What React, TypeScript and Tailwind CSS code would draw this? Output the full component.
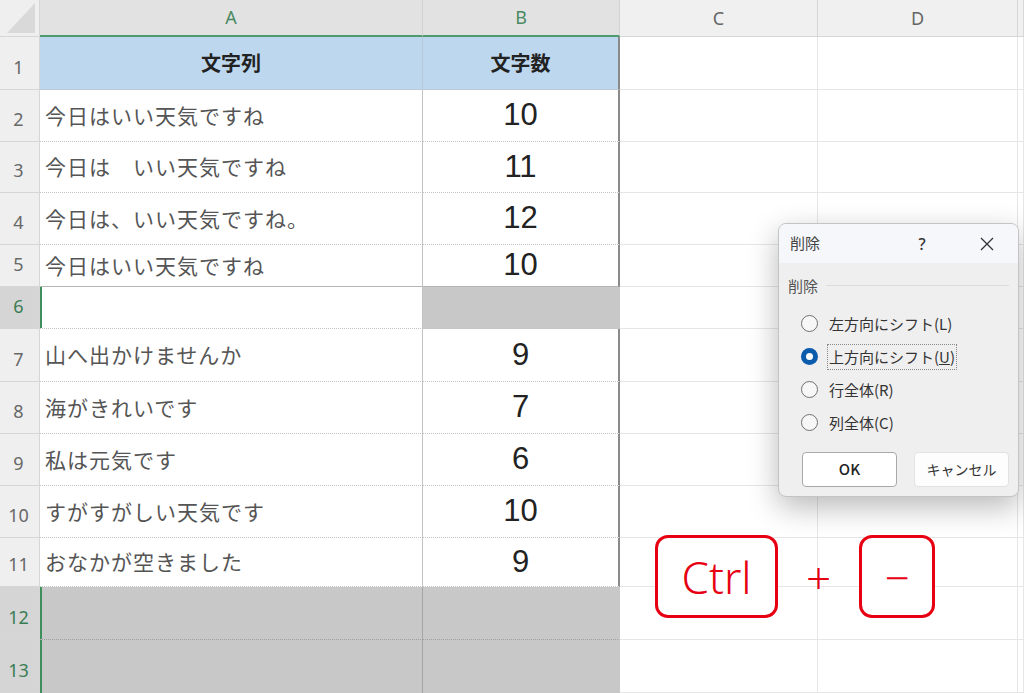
import clsx from "clsx"

type Row = { n: number; text?: string; count?: string; kind: "data" | "blank" | "grey" }

const ROWS: Row[] = [
  { n: 2, text: "今日はいい天気ですね", count: "10", kind: "data" },
  { n: 3, text: "今日は　いい天気ですね", count: "11", kind: "data" },
  { n: 4, text: "今日は、いい天気ですね。", count: "12", kind: "data" },
  { n: 5, text: "今日はいい天気ですね", count: "10", kind: "data" },
  { n: 6, kind: "blank" },
  { n: 7, text: "山へ出かけませんか", count: "9", kind: "data" },
  { n: 8, text: "海がきれいです", count: "7", kind: "data" },
  { n: 9, text: "私は元気です", count: "6", kind: "data" },
  { n: 10, text: "すがすがしい天気です", count: "10", kind: "data" },
  { n: 11, text: "おなかが空きました", count: "9", kind: "data" },
  { n: 12, kind: "grey" },
  { n: 13, kind: "grey" },
]

const jp = "font-['Noto_Sans_CJK_JP','Noto_Sans',sans-serif]"

function RowHead({ n, sel }: { n: number; sel?: boolean }) {
  return (
    <div
      className={clsx(
        "flex items-end justify-center pb-[9px] pr-[2px] border-r border-b border-[#d6d6d6] text-[18px] leading-[25px] font-['Noto_Sans',sans-serif]",
        sel ? "bg-[#d5d5d5] text-[#3b7d54]" : "bg-[#efefef] text-[#686868]",
      )}
    >
      {n}
    </div>
  )
}

function ColHead({ label, sel }: { label: string; sel?: boolean }) {
  return (
    <div
      className={clsx(
        "flex items-center justify-center border-r text-[18px] font-['Noto_Sans',sans-serif]",
        sel
          ? "bg-[#e2e2e2] text-[#4a8a62] border-b-2 border-b-[#4e9a6c] border-r-[#d2d2d2]"
          : "bg-[#f0f0f0] text-[#666] border-b border-[#d6d6d6]",
      )}
    >
      {label}
    </div>
  )
}

function Plain() {
  return <div className="border-r border-b border-[#e6e6e6] bg-white" />
}

function Radio({ label, checked, focus }: { label: React.ReactNode; checked?: boolean; focus?: boolean }) {
  return (
    <div className="flex h-[33px] items-center">
      {checked ? (
        <div className="flex h-[17px] w-[17px] items-center justify-center rounded-full bg-[#0b5cad]">
          <div className="h-[7px] w-[7px] rounded-full bg-white" />
        </div>
      ) : (
        <div className="h-[17px] w-[17px] rounded-full border border-[#707070] bg-[#f7f7f7]" />
      )}
      <div
        className={clsx(
          "ml-[9px] px-[1px] text-[15px] leading-[24px] text-[#333]",
          focus ? "border border-dotted border-[#8a8a8a]" : "border border-transparent",
        )}
      >
        {label}
      </div>
    </div>
  )
}

export default function App() {
  return (
    <div className="relative h-[693px] w-[1024px] overflow-hidden bg-white">
      <div className="grid h-full grid-cols-[40px_383px_197px_198px_200px_1fr] grid-rows-[37px_53px_52px_51px_52px_42px_42px_53px_52px_52px_52px_49px_53px_53px]">
        {/* column headers */}
        <div className="relative border-r border-b border-[#d6d6d6] bg-[#efefef]">
          <svg className="absolute right-[4px] bottom-[3px]" width="28" height="30" viewBox="0 0 28 30">
            <polygon points="28,0 28,30 0,30" fill="#d9d9d9" />
          </svg>
        </div>
        <ColHead label="A" sel />
        <ColHead label="B" sel />
        <ColHead label="C" />
        <ColHead label="D" />
        <ColHead label="" />

        {/* header row */}
        <RowHead n={1} />
        <div className={clsx("flex items-center justify-center border-r border-b border-[#b9c9d8] bg-[#bdd7ee] text-[20px] font-bold text-[#222]", jp)}>
          文字列
        </div>
        <div className={clsx("flex items-center justify-center border-r-2 border-r-[#8a8a8a] border-b border-b-[#b9c9d8] bg-[#bdd7ee] text-[20px] font-bold text-[#222]", jp)}>
          文字数
        </div>
        <Plain />
        <Plain />
        <Plain />

        {ROWS.map((r) => {
          const sel = r.kind !== "data"
          const grey = r.kind === "grey"
          const bottom =
            r.n === 5
              ? "border-b border-b-[#b5b5b5]"
              : r.n === 13
                ? "border-b-0"
                : clsx("border-b [border-bottom-style:dotted]", grey ? "border-b-[#9e9e9e]" : "border-b-[#c4c4c4]")
          return [
            <RowHead key={`h${r.n}`} n={r.n} sel={sel} />,
            <div
              key={`a${r.n}`}
              className={clsx(
                "flex items-center overflow-hidden whitespace-nowrap pl-[5px] text-[21px] tracking-[1px] text-[#555] border-r",
                jp,
                bottom,
                grey ? "bg-[#c8c8c8] border-r-[#a6a6a6]" : "bg-white border-r-[#c2c2c2]",
                sel && "shadow-[inset_2px_0_0_#3f8f5c]",
              )}
            >
              {r.text}
            </div>,
            <div
              key={`b${r.n}`}
              className={clsx(
                "flex items-center justify-center text-[31px] text-[#222] font-['Liberation_Sans',Arial,sans-serif] border-r-2",
                bottom,
                r.kind === "data" ? "bg-white border-r-[#8a8a8a]" : "bg-[#c8c8c8] border-r-[#c8c8c8]",
              )}
            >
              {r.count}
            </div>,
            <Plain key={`c${r.n}`} />,
            <Plain key={`d${r.n}`} />,
            <Plain key={`e${r.n}`} />,
          ]
        })}
      </div>

      {/* delete dialog */}
      <div
        className={clsx(
          "absolute left-[778px] top-[223px] flex h-[274px] w-[241px] flex-col overflow-hidden rounded-[8px] border border-[#c4c4c4] bg-[#efefef] shadow-[0_10px_30px_rgba(0,0,0,0.28)]",
          jp,
        )}
      >
        <div className="flex h-[39px] shrink-0 items-center bg-[#f5f7fa] pl-[11px] pr-[8px]">
          <span className="text-[15px] text-[#444]">削除</span>
          <div className="ml-auto flex items-center gap-[19px]">
            <div className="flex w-[46px] justify-center text-[16px] font-medium text-[#333] font-['Noto_Sans',sans-serif]">?</div>
            <div className="flex w-[46px] justify-center">
              <svg width="14" height="14" viewBox="0 0 14 14">
                <path d="M1 1L13 13M13 1L1 13" stroke="#333" strokeWidth="1.3" fill="none" />
              </svg>
            </div>
          </div>
        </div>
        <div className="flex flex-1 flex-col px-[9px]">
          <div className="mt-[13px] flex items-center">
            <span className="text-[15px] leading-[20px] text-[#555]">削除</span>
            <div className="ml-[8px] mt-[-2px] h-px flex-1 bg-[#dcdcdc]" />
          </div>
          <div className="mt-[11px] flex flex-col pl-[13px]">
            <Radio label="左方向にシフト(L)" />
            <Radio
              checked
              focus
              label={
                <>
                  上方向にシフト(<span className="underline">U</span>)
                </>
              }
            />
            <Radio label="行全体(R)" />
            <Radio label="列全体(C)" />
          </div>
          <div className="mt-[13px] flex gap-[17px] pl-[14px]">
            <div className="flex h-[35px] w-[95px] items-center justify-center rounded-[4px] border border-[#a9a9a9] bg-white text-[15px] font-medium text-[#222]">
              OK
            </div>
            <div className="flex h-[35px] w-[95px] items-center justify-center rounded-[4px] border border-[#e2e2e2] bg-[#fdfdfd] text-[14px] text-[#333]">
              キャンセル
            </div>
          </div>
        </div>
      </div>

      {/* shortcut keys */}
      <div className="absolute left-[655px] top-[535px] flex items-center font-['Noto_Sans',sans-serif] text-[#e60012]">
        <div className="flex h-[83px] w-[123px] items-center justify-center rounded-[13px] border-[3px] border-[#e60012] bg-white text-[44px] font-light">
          Ctrl
        </div>
        <div className="ml-[27px] w-[27px] text-center text-[44px] font-light leading-none">+</div>
        <div className="ml-[27px] flex h-[83px] w-[76px] items-center justify-center rounded-[13px] border-[3px] border-[#e60012] bg-white text-[44px] font-light">
          −
        </div>
      </div>
    </div>
  )
}
